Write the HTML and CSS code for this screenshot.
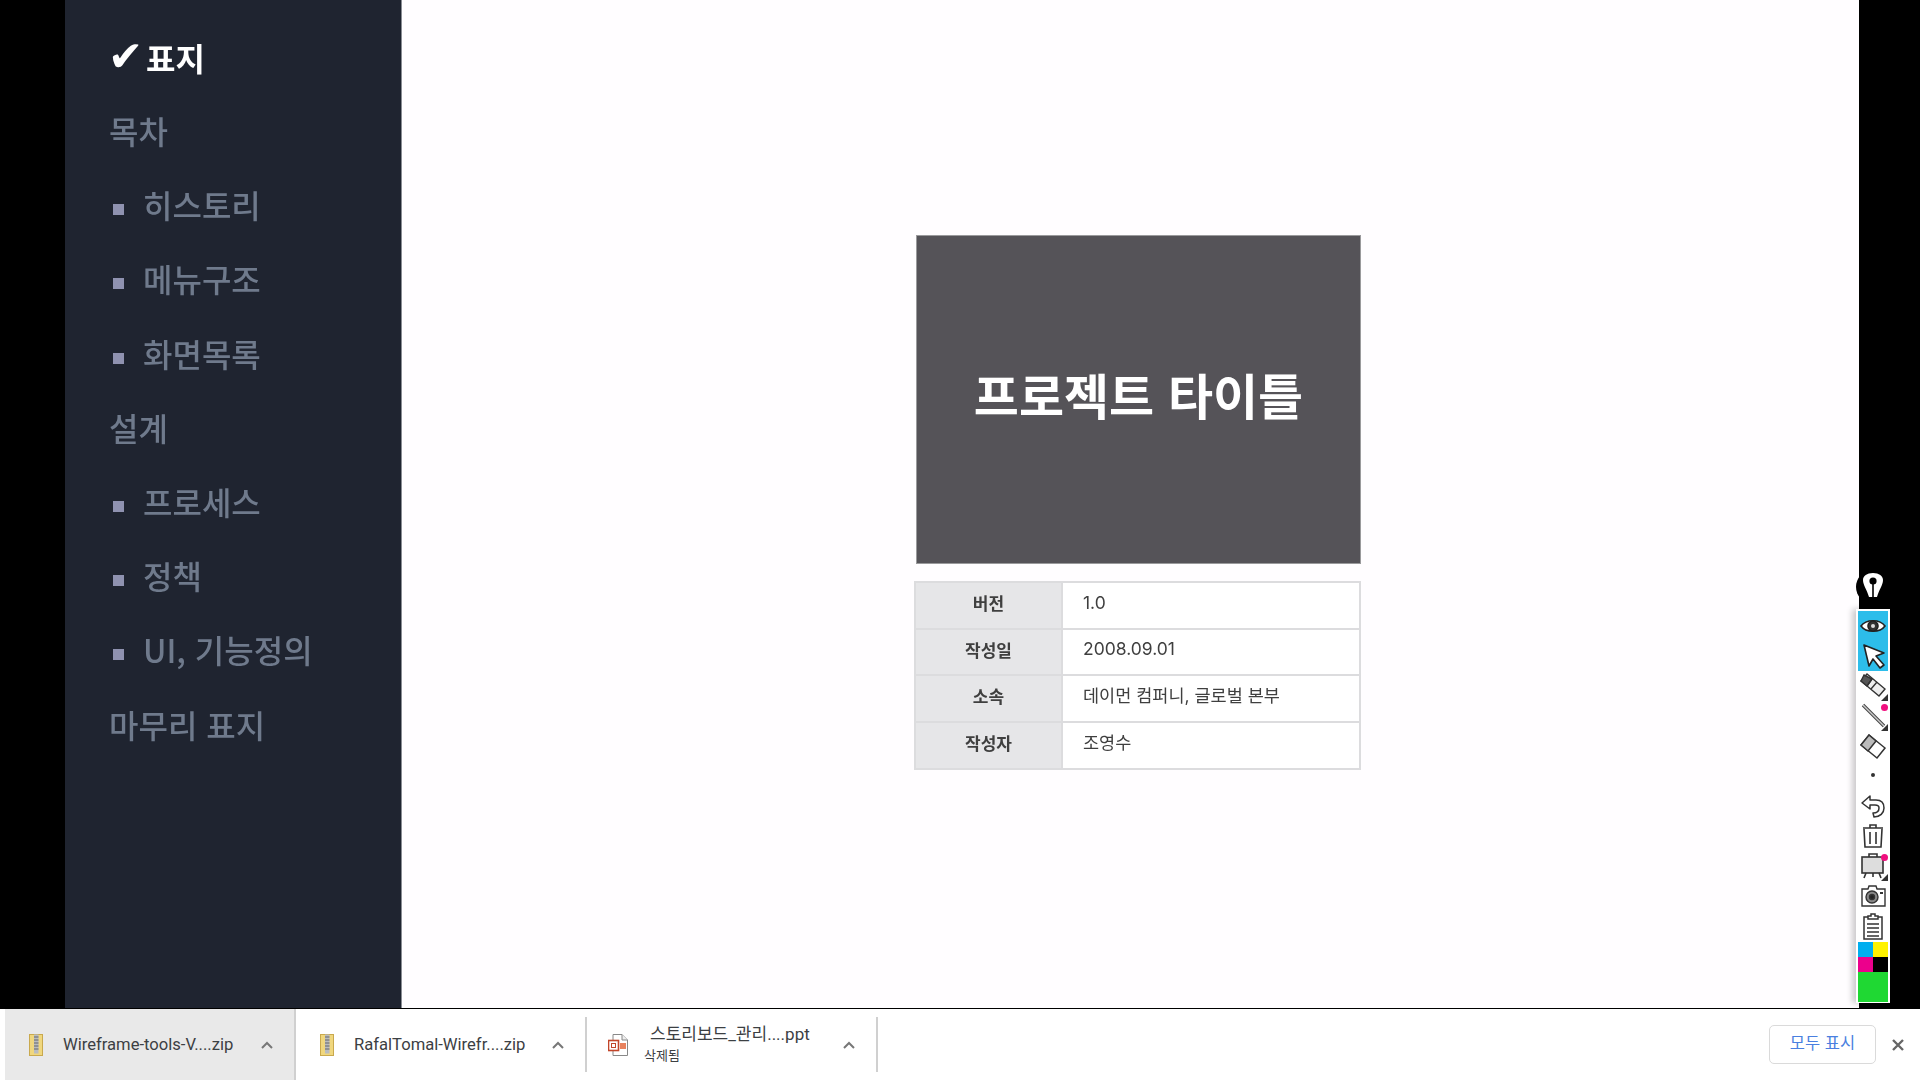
FILE: index.html
```html
<!DOCTYPE html>
<html lang="ko">
<head>
  <meta charset="UTF-8" />
  <title>스토리보드</title>
  <link rel="stylesheet" href="styles.css">
</head>
<body>
  <div class="screen">
    <nav class="sidebar">
      <ul class="toc">
        <li class="toc-item active"><span class="check">✔</span>표지</li>
        <li class="toc-item">목차</li>
        <li class="toc-item sub">히스토리</li>
        <li class="toc-item sub">메뉴구조</li>
        <li class="toc-item sub">화면목록</li>
        <li class="toc-item">설계</li>
        <li class="toc-item sub">프로세스</li>
        <li class="toc-item sub">정책</li>
        <li class="toc-item sub">UI, 기능정의</li>
        <li class="toc-item">마무리 표지</li>
      </ul>
    </nav>
    <main class="stage">
      <div class="cover">
        <h1 class="cover-title">프로젝트 타이틀</h1>
      </div>
      <table class="meta">
        <tr><th>버전</th><td>1.0</td></tr>
        <tr><th>작성일</th><td>2008.09.01</td></tr>
        <tr><th>소속</th><td>데이먼 컴퍼니, 글로벌 본부</td></tr>
        <tr><th>작성자</th><td>조영수</td></tr>
      </table>
    </main>
  </div>

  <!-- pen annotation toolbar, floats over the screen -->
  <aside class="pen-tools">
    <div class="pen-logo">
      <svg viewBox="0 0 34 34" width="34" height="34">
        <circle cx="17" cy="17" r="17" fill="#000"/>
        <path d="M7 10 C7 6 11 3 17 3 C23 3 27 6 27 10 C27 15 23 20 21 27 H13 C11 20 7 15 7 10 Z" fill="#fff"/>
        <circle cx="17" cy="11" r="3.6" fill="#000"/>
        <path d="M17 13 V27" stroke="#000" stroke-width="1.6"/>
      </svg>
    </div>
    <div class="tool-list">
      <div class="tool selected">
        <svg viewBox="0 0 30 30" width="30" height="30" fill="none" stroke="#222" stroke-width="1.6">
          <path d="M3 15 C8 8 22 8 27 15 C22 22 8 22 3 15 Z" fill="#fff"/>
          <circle cx="15" cy="15" r="5" fill="#333"/>
          <circle cx="15" cy="15" r="2" fill="#ddd" stroke="none"/>
        </svg>
      </div>
      <div class="tool selected">
        <svg viewBox="0 0 30 30" width="30" height="30">
          <path d="M6 4 L26 12 L18 15 L26 24 L22 27 L15 18 L11 25 Z" fill="#fff" stroke="#222" stroke-width="1.6" stroke-linejoin="round"/>
        </svg>
      </div>
      <div class="tool">
        <svg viewBox="0 0 30 30" width="30" height="30" fill="none" stroke="#333" stroke-width="1.4">
          <path d="M3 10 L9 3 L27 18 L21 25 Z" fill="#eee"/>
          <path d="M6 4 L3 10 L9 15 L14 8 Z" fill="#555"/>
          <path d="M9 15 L14 8 M13 18 L19 11"/>
        </svg>
        <span class="corner"></span>
      </div>
      <div class="tool">
        <svg viewBox="0 0 30 30" width="30" height="30" fill="none">
          <path d="M5 4 L26 25" stroke="#444" stroke-width="3.4"/>
          <path d="M5 4 L26 25" stroke="#ccc" stroke-width="1.4"/>
        </svg>
        <span class="dot-pink"></span>
        <span class="corner"></span>
      </div>
      <div class="tool">
        <svg viewBox="0 0 30 30" width="30" height="30" stroke="#333" stroke-width="1.5">
          <path d="M3 14 L11 4 L27 17 L19 27 Z" fill="#fff"/>
          <path d="M3 14 L11 4 L18 10 L10 20 Z" fill="#bbb"/>
        </svg>
      </div>
      <div class="tool">
        <span class="size-dot"></span>
      </div>
      <div class="tool">
        <svg viewBox="0 0 30 30" width="30" height="30" fill="#fff" stroke="#333" stroke-width="1.5" stroke-linejoin="round">
          <path d="M4 12 L12 5 V9 H18 C24 9 26 13 26 17 C26 22 22 26 16 26 L15 22 C19 22 21 20 21 17 C21 15 19 14 17 14 H12 V18 Z"/>
        </svg>
      </div>
      <div class="tool">
        <svg viewBox="0 0 30 30" width="30" height="30" fill="none" stroke="#333" stroke-width="1.6">
          <path d="M5 7 H25 M12 7 V4 H18 V7"/>
          <path d="M6 8 L7 26 H23 L24 8"/>
          <path d="M12 11 V23 M18 11 V23"/>
        </svg>
      </div>
      <div class="tool">
        <svg viewBox="0 0 30 30" width="30" height="30" fill="none" stroke="#333" stroke-width="1.6">
          <rect x="4" y="6" width="21" height="16" fill="#ddd"/>
          <path d="M11 6 V3 H19 V6 M8 22 L6 27 M21 22 L23 27 M15 22 V26"/>
        </svg>
        <span class="dot-pink"></span>
        <span class="corner"></span>
      </div>
      <div class="tool">
        <svg viewBox="0 0 30 30" width="30" height="30" fill="none" stroke="#333" stroke-width="1.4">
          <path d="M4 8 H10 L11 5 H18 L19 8 H27 V25 H4 Z" fill="#fff"/>
          <circle cx="14" cy="16" r="6" fill="#888"/>
          <circle cx="14" cy="16" r="2.5" fill="#222"/>
          <rect x="22" y="11" width="3" height="2" fill="#333" stroke="none"/>
        </svg>
      </div>
      <div class="tool">
        <svg viewBox="0 0 30 30" width="30" height="30" fill="none" stroke="#333" stroke-width="1.5">
          <path d="M10 6 H6 V28 H24 V6 H20"/>
          <path d="M10 8 V5 H13 V3 H17 V5 H20 V8 Z" fill="#fff"/>
          <path d="M9 13 H21 M9 17 H21 M9 21 H21 M9 25 H21"/>
        </svg>
      </div>
      <div class="swatches">
        <span class="swatch cyan"></span>
        <span class="swatch yellow"></span>
        <span class="swatch magenta"></span>
        <span class="swatch black"></span>
        <span class="swatch green"></span>
      </div>
    </div>
  </aside>

  <footer class="shelf">
    <div class="download current">
      <svg class="file-icon" viewBox="0 0 14 22" width="14" height="22">
        <rect x="0.5" y="0.5" width="13" height="21" fill="#f0d77e" stroke="#c9a94e"/>
        <rect x="5" y="0.5" width="4.5" height="19" fill="#b9bcc0"/>
        <path d="M5 3 H9.5 M5 6 H9.5 M5 9 H9.5 M5 12 H9.5 M5 15 H9.5" stroke="#666"/>
      </svg>
      <span class="file-name">Wireframe-tools-V....zip</span>
      <svg class="chevron" viewBox="0 0 12 8" width="12" height="8"><path d="M1 7 L6 2 L11 7" fill="none" stroke="#777" stroke-width="2"/></svg>
    </div>
    <div class="download">
      <svg class="file-icon" viewBox="0 0 14 22" width="14" height="22">
        <rect x="0.5" y="0.5" width="13" height="21" fill="#f0d77e" stroke="#c9a94e"/>
        <rect x="5" y="0.5" width="4.5" height="19" fill="#b9bcc0"/>
        <path d="M5 3 H9.5 M5 6 H9.5 M5 9 H9.5 M5 12 H9.5 M5 15 H9.5" stroke="#666"/>
      </svg>
      <span class="file-name">RafalTomal-Wirefr....zip</span>
      <svg class="chevron" viewBox="0 0 12 8" width="12" height="8"><path d="M1 7 L6 2 L11 7" fill="none" stroke="#777" stroke-width="2"/></svg>
    </div>
    <div class="download">
      <svg class="file-icon ppt" viewBox="0 0 20 22" width="20" height="22">
        <path d="M5 0.5 H14 L19.5 6 V21.5 H5 Z" fill="#fff" stroke="#888"/>
        <path d="M14 0.5 V6 H19.5" fill="#eee" stroke="#888"/>
        <rect x="12" y="9" width="6" height="6" fill="#e8825e"/>
        <rect x="0.5" y="6.5" width="10" height="10" fill="#fff" stroke="#c2452a" stroke-width="1.6"/>
        <rect x="3.5" y="9.5" width="4" height="4" fill="none" stroke="#c2452a"/>
      </svg>
      <div class="file-text">
        <span class="file-name indented">스토리보드_관리....ppt</span>
        <span class="file-status">삭제됨</span>
      </div>
      <svg class="chevron" viewBox="0 0 12 8" width="12" height="8"><path d="M1 7 L6 2 L11 7" fill="none" stroke="#777" stroke-width="2"/></svg>
    </div>
    <button class="show-all" type="button">모두 표시</button>
    <svg class="close" viewBox="0 0 12 12" width="12" height="12"><path d="M1 1 L11 11 M11 1 L1 11" stroke="#666" stroke-width="2.4"/></svg>
  </footer>
</body>
</html>
```

FILE: styles.css
```css
* {
  box-sizing: border-box;
}

html, body {
  height: 100%;
}

body {
  margin: 0;
  display: flex;
  flex-direction: column;
  overflow: hidden;
  background-color: #000;
  font-family: "Noto Sans CJK KR", "Noto Sans", sans-serif;
}

.screen {
  height: 1008px;
  display: flex;
  padding: 0 61px 0 65px;
  background-color: #000;
}

/* Left nav */
.sidebar {
  width: 337px;
  padding: 21px 0 0 44px;
  background-color: #1f2430;
  border-right: 1px solid #8a8d94;
  filter: blur(0.5px);
}

.toc {
  margin: 0;
  padding: 0;
  list-style: none;
}

.toc-item {
  display: flex;
  align-items: center;
  height: 74.2px;
  font-size: 32px;
  font-weight: 500;
  color: #6f7a8c;
}

.toc-item.active {
  height: 72px;
  font-weight: 700;
  color: #fff;
}

.toc-item.sub::before {
  content: "";
  width: 11px;
  height: 11px;
  margin: 11px 19px 0 4px;
  background-color: #8f92b0;
}

.check {
  width: 38px;
  margin-left: -1px;
  font-family: "DejaVu Sans", sans-serif;
  font-size: 42px;
  font-weight: 700;
  line-height: 1;
}

/* Slide */
.stage {
  flex: 1;
  display: flex;
  flex-direction: column;
  align-items: flex-start;
  padding: 235px 0 0 514px;
  background-color: #fffdff;
  filter: blur(0.4px);
}

.cover {
  width: 445px;
  height: 329px;
  display: flex;
  align-items: center;
  justify-content: center;
  background-color: #555358;
  border: 1px solid #9a9a9c;
}

.cover-title {
  margin: 0 0 12px;
  font-size: 49px;
  font-weight: 700;
  color: #fff;
}

.meta {
  width: 447px;
  margin: 17px 0 0 -2px;
  border-collapse: collapse;
  font-size: 17.5px;
  color: #3f3f3f;
}

.meta tr {
  height: 46.7px;
}

.meta th,
.meta td {
  padding: 0;
  border: 2px solid #dcdcde;
  line-height: 1;
}

.meta th {
  width: 147px;
  padding-bottom: 6px;
  background-color: #e6e6e8;
  font-size: 17px;
  font-weight: 700;
}

.meta td {
  padding: 0 0 6px 20px;
  background-color: #fff;
  font-family: Inter, "Noto Sans CJK KR", sans-serif;
}

/* Pen toolbar */
.pen-tools {
  position: absolute;
  top: 570px;
  left: 1856px;
  width: 34px;
}

.pen-logo {
  height: 39px;
}

.tool-list {
  height: 394px;
  padding: 2px;
  background-color: #fff;
  box-shadow: -4px 0 6px rgba(0, 0, 0, 0.2);
}

.tool {
  position: relative;
  height: 30px;
}

.tool.selected {
  background-color: #2dbdea;
}

.size-dot {
  position: absolute;
  top: 12px;
  left: 13px;
  width: 4px;
  height: 4px;
  border-radius: 50%;
  background-color: #333;
}

.dot-pink {
  position: absolute;
  top: 3px;
  right: 0;
  width: 7px;
  height: 7px;
  border-radius: 50%;
  background-color: #f0107f;
}

.corner {
  position: absolute;
  right: 0;
  bottom: 0;
  border-style: solid;
  border-width: 0 0 7px 7px;
  border-color: transparent transparent #333 transparent;
}

.swatches {
  display: grid;
  grid-template-columns: 15px 15px;
  grid-auto-rows: 15px;
  margin-top: 1px;
}

.swatch.cyan { background-color: #00aeef; }
.swatch.yellow { background-color: #fff200; }
.swatch.magenta { background-color: #ec008c; }
.swatch.black { background-color: #000; }
.swatch.green {
  grid-column: span 2;
  grid-row: span 2;
  background-color: #1fd833;
}

/* Download shelf */
.shelf {
  flex: 1;
  display: flex;
  align-items: center;
  padding-left: 5px;
  background-color: #fff;
  border-top: 1px solid #000;
  font-family: Roboto, "Noto Sans CJK KR", sans-serif;
  font-size: 16.6px;
  color: #3c4043;
}

.download {
  width: 291px;
  height: 55px;
  display: flex;
  align-items: center;
  padding: 0 21px 0 24px;
  border-right: 2px solid #d0d0d0;
}

.download.current {
  height: 100%;
  background-color: #e9e9e9;
}

.file-icon {
  flex: none;
  margin-right: 20px;
}

.file-icon.ppt {
  margin-left: -3px;
  margin-right: 16px;
}

.file-name {
  flex: 1;
  white-space: nowrap;
}

.file-text {
  flex: 1;
  display: flex;
  flex-direction: column;
  margin-top: -2px;
}

.file-name.indented {
  padding-left: 6px;
  font-size: 17px;
  line-height: 24px;
}

.file-status {
  font-size: 13px;
  line-height: 20px;
}

.chevron {
  flex: none;
}

.show-all {
  width: 107px;
  height: 39px;
  margin-left: auto;
  padding: 0 0 5px;
  background-color: #fff;
  border: 1px solid #dadada;
  border-radius: 5px;
  font-family: "Noto Sans CJK KR", sans-serif;
  font-size: 16.5px;
  color: #4a7fe0;
}

.close {
  margin: 0 16px 0 16px;
}
```
